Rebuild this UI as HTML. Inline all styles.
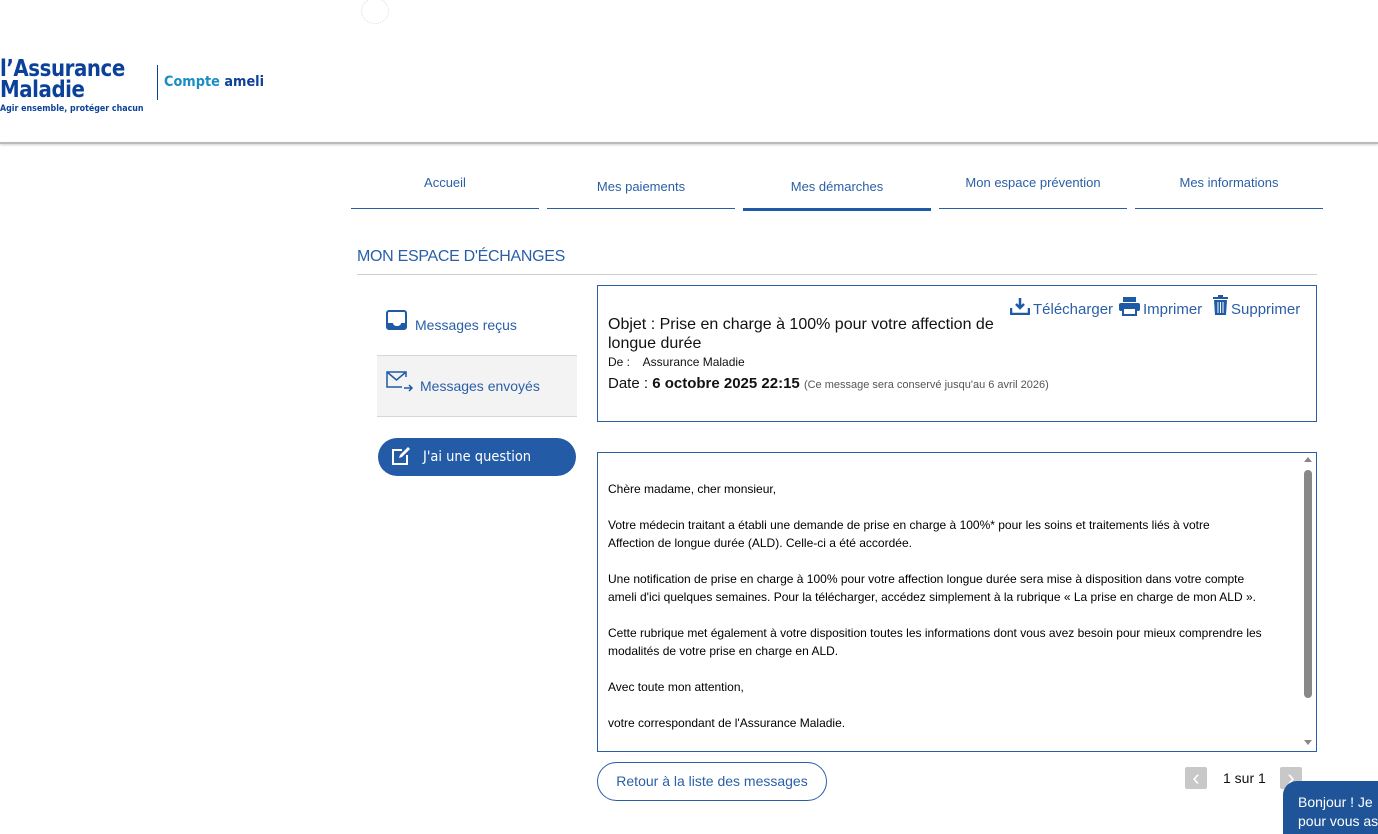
<!DOCTYPE html>
<html><head><meta charset="utf-8"><style>
html,body{margin:0;width:1378px;height:834px;overflow:hidden;background:#fff;font-family:"Liberation Sans",Arial,sans-serif;position:relative}
.a{position:absolute}
.tab{position:absolute;top:160px;width:188px;height:48px;border-bottom:1px solid #2a5fa8;color:#2a5fa8;font-size:13px;text-align:center}
.body p{margin:0 0 18px;font-size:12px;line-height:18px;color:#000}
</style></head><body>
<div class="a" style="left:361px;top:-2px;width:26px;height:24px;border:1px dotted #ddd;border-radius:50%"></div>
<div class="a" style="left:0;top:59px;color:#0c419a;font-weight:bold;font-size:23px;line-height:21px;letter-spacing:-0.5px;font-family:'DejaVu Sans',sans-serif;transform:scaleX(0.86);transform-origin:left">l’Assurance<br>Maladie</div>
<div class="a" style="left:0;top:104px;color:#0c419a;font-weight:bold;font-size:9px;font-family:'DejaVu Sans',sans-serif;transform:scaleX(0.88);transform-origin:left">Agir ensemble, protéger chacun</div>
<div class="a" style="left:157px;top:65px;width:1px;height:35px;background:#0c419a"></div>
<div class="a" style="left:164px;top:74px;font-weight:bold;font-size:14px;font-family:'DejaVu Sans',sans-serif;transform:scaleX(0.92);transform-origin:left"><span style="color:#1b8cc4">Compte</span> <span style="color:#0c419a">ameli</span></div>
<div class="a" style="left:0;top:142px;width:1378px;height:2px;background:#bbb;box-shadow:0 1px 2px #ccc"></div>
<div class="tab" style="left:351px;line-height:46px">Accueil</div>
<div class="tab" style="left:547px;line-height:54px">Mes paiements</div>
<div class="tab" style="left:743px;line-height:54px;border-bottom:3px solid #1f5aa6;height:48px">Mes démarches</div>
<div class="tab" style="left:939px;line-height:46px">Mon espace prévention</div>
<div class="tab" style="left:1135px;line-height:46px">Mes informations</div>
<div class="a" style="left:357px;top:248px;color:#2a5fa8;font-size:16px;letter-spacing:-0.3px">MON ESPACE D'ÉCHANGES</div>
<div class="a" style="left:357px;top:274px;width:960px;height:1px;background:#ccc"></div>
<div class="a" style="left:377px;top:355px;width:200px;height:60px;background:#f3f3f3;border-top:1px solid #d6d6d6;border-bottom:1px solid #d6d6d6"></div>
<svg class="a" style="left:386px;top:310px" width="22" height="20" viewBox="0 0 22 20"><rect x="1" y="1" width="19" height="18" rx="2" fill="none" stroke="#1f5aa6" stroke-width="2"/><path d="M1 13h6c0 2 2 3 4 3s4-1 4-3h5v6H1z" fill="#1f5aa6"/></svg>
<div class="a" style="left:415px;top:317px;color:#2a5fa8;font-size:14px">Messages reçus</div>
<svg class="a" style="left:386px;top:370px" width="28" height="22" viewBox="0 0 28 22"><path d="M20 7V2H1v15h15" fill="none" stroke="#1f5aa6" stroke-width="1.5"/><path d="M1 2l9.5 8L20 2" fill="none" stroke="#1f5aa6" stroke-width="1.5"/><path d="M18 18h8m-3-3l3 3-3 3" fill="none" stroke="#1f5aa6" stroke-width="1.5"/></svg>
<div class="a" style="left:420px;top:378px;color:#2a5fa8;font-size:14px">Messages envoyés</div>
<div class="a" style="left:378px;top:438px;width:198px;height:38px;border-radius:19px;background:#245ba6"></div>
<svg class="a" style="left:391px;top:446px" width="20" height="20" viewBox="0 0 20 20"><path d="M11 4H2v14h14V9" fill="none" stroke="#fff" stroke-width="2"/><path d="M8 12l1-3 8-8 2 2-8 8z" fill="#fff"/></svg>
<div class="a" style="left:423px;top:449px;color:#fff;font-size:14px;font-family:'DejaVu Sans',sans-serif;transform:scaleX(0.93);transform-origin:left">J'ai une question</div>
<div class="a" style="left:597px;top:285px;width:718px;height:135px;border:1px solid #2a5fa8"></div>
<div class="a" style="left:608px;top:315px;font-size:16px;line-height:19px;color:#111;width:400px">Objet : Prise en charge à 100% pour votre affection de longue durée</div>
<div class="a" style="left:608px;top:355px;font-size:12px;color:#111">De :&nbsp;&nbsp;&nbsp; Assurance Maladie</div>
<div class="a" style="left:608px;top:375px;font-size:15px;color:#111">Date : <b>6 octobre 2025 22:15</b> <span style="font-size:11px;color:#555">(Ce message sera conservé jusqu'au 6 avril 2026)</span></div>
<svg class="a" style="left:1010px;top:297px" width="20" height="18" viewBox="0 0 20 18"><path d="M10 1v10m-4-4l4 4 4-4" fill="none" stroke="#1f5aa6" stroke-width="2.5"/><path d="M1 11v6h18v-6" fill="none" stroke="#1f5aa6" stroke-width="2.5"/></svg>
<div class="a" style="left:1033px;top:301px;color:#2a5fa8;font-size:15px">Télécharger</div>
<svg class="a" style="left:1119px;top:297px" width="21" height="19" viewBox="0 0 21 19"><rect x="4" y="0" width="13" height="5" fill="#1f5aa6"/><rect x="0" y="6" width="21" height="8" rx="2" fill="#1f5aa6"/><rect x="4" y="11" width="13" height="7" fill="#fff" stroke="#1f5aa6" stroke-width="2"/></svg>
<div class="a" style="left:1143px;top:301px;color:#2a5fa8;font-size:15px">Imprimer</div>
<svg class="a" style="left:1213px;top:295px" width="15" height="20" viewBox="0 0 15 20"><rect x="0" y="2" width="15" height="2" fill="#1f5aa6"/><rect x="5" y="0" width="5" height="3" fill="#1f5aa6"/><path d="M1 5h13l-1 15H2z" fill="#1f5aa6"/><path d="M5 7v11M7.5 7v11M10 7v11" stroke="#fff" stroke-width="1"/></svg>
<div class="a" style="left:1231px;top:301px;color:#2a5fa8;font-size:15px">Supprimer</div>
<div class="a" style="left:597px;top:452px;width:718px;height:298px;border:1px solid #2a5fa8"></div>
<div class="a" style="left:1304px;top:470px;width:8px;height:228px;background:#888;border-radius:4px"></div>
<div class="a" style="left:1304px;top:457px;width:0;height:0;border:4px solid transparent;border-bottom:5px solid #888;border-top:0"></div>
<div class="a" style="left:1304px;top:740px;width:0;height:0;border:4px solid transparent;border-top:5px solid #888;border-bottom:0"></div>
<div class="a body" style="left:608px;top:480px;width:685px">
<p>Chère madame, cher monsieur,</p>
<p>Votre médecin traitant a établi une demande de prise en charge à 100%* pour les soins et traitements liés à votre<br>Affection de longue durée (ALD). Celle-ci a été accordée.</p>
<p>Une notification de prise en charge à 100% pour votre affection longue durée sera mise à disposition dans votre compte<br>ameli d'ici quelques semaines. Pour la télécharger, accédez simplement à la rubrique « La prise en charge de mon ALD ».</p>
<p>Cette rubrique met également à votre disposition toutes les informations dont vous avez besoin pour mieux comprendre les modalités de votre prise en charge en ALD.</p>
<p>Avec toute mon attention,</p>
<p>votre correspondant de l'Assurance Maladie.</p>
</div>
<div class="a" style="left:597px;top:762px;width:228px;height:37px;border:1px solid #2a5fa8;border-radius:20px;color:#2a5fa8;font-size:14px;text-align:center;line-height:37px">Retour à la liste des messages</div>
<div class="a" style="left:1185px;top:767px;width:22px;height:22px;background:#c8c8c8;border-radius:2px;color:#fff;text-align:center;line-height:21px;font-size:22px">‹</div>
<div class="a" style="left:1223px;top:770px;font-size:14px;color:#111">1 sur 1</div>
<div class="a" style="left:1280px;top:767px;width:22px;height:22px;background:#c8c8c8;border-radius:2px;color:#fff;text-align:center;line-height:21px;font-size:22px">›</div>
<div class="a" style="left:1283px;top:781px;width:95px;height:53px;background:#1f5598;border-radius:14px 0 0 0;color:#fff;font-size:14px;line-height:19px;padding:12px 0 0 15px;box-sizing:border-box;white-space:nowrap;overflow:hidden">Bonjour ! Je<br>pour vous as</div>
</body></html>
